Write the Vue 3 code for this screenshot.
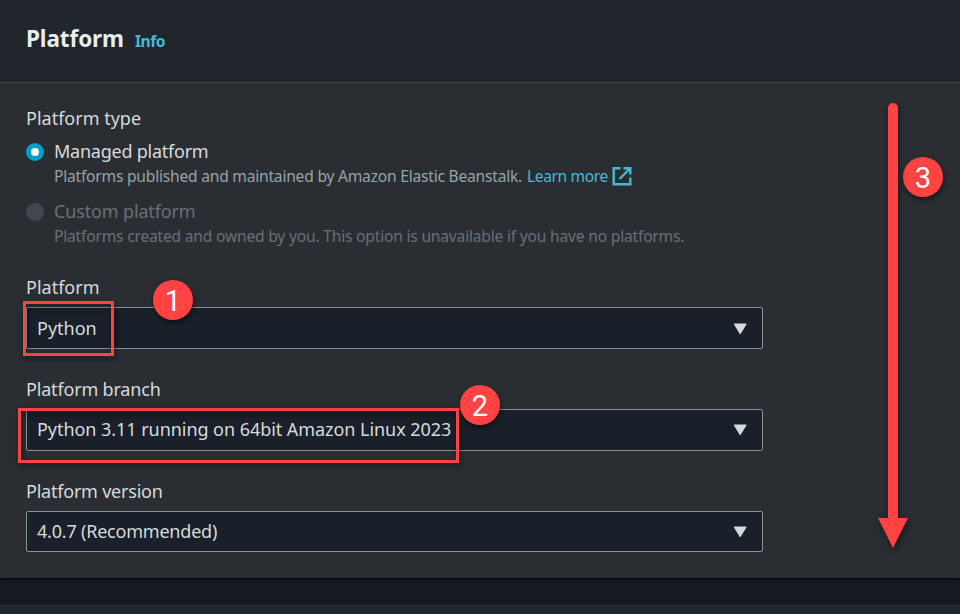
<script setup>
const fields = [
  { label: 'Platform', value: 'Python', key: 'platform' },
  { label: 'Platform branch', value: 'Python 3.11 running on 64bit Amazon Linux 2023', key: 'branch' },
  { label: 'Platform version', value: '4.0.7 (Recommended)', key: 'version' },
]
</script>

<template>
  <main class="page">
    <section class="panel">
      <header class="head">
        <h2 class="title">Platform</h2>
        <a class="info">Info</a>
      </header>
      <div class="body">
        <div class="label type-label"><span>Platform type</span></div>
        <div class="option">
          <span class="radio on"></span>
          <div class="copy">
            <div class="name"><span class="n1">Managed platform</span></div>
            <div class="desc">
              <span class="d1">Platforms published and maintained by Amazon Elastic Beanstalk.</span>
              <a class="link">Learn more</a>
              <svg class="ext" width="20" height="20" viewBox="0 0 20 20" fill="none" stroke="#44b9d6" stroke-width="2.4">
                <path d="M8.5 2.2H1.7V18.3H18.3V11.5" />
                <path d="M11.5 2.2H18.3V8.5M18 2.5L7.5 13" />
              </svg>
            </div>
          </div>
        </div>
        <div class="option disabled">
          <span class="radio"></span>
          <div class="copy">
            <div class="name"><span class="n2">Custom platform</span></div>
            <div class="desc"><span class="d2">Platforms created and owned by you. This option is unavailable if you have no platforms.</span></div>
          </div>
        </div>
        <div v-for="f in fields" :key="f.key" class="field" :class="f.key">
          <div class="label"><span>{{ f.label }}</span></div>
          <div class="select">
            <span class="value">{{ f.value }}</span>
            <svg class="caret" width="14" height="12" viewBox="0 0 14 12">
              <path d="M1.2 1H13.2L7.2 10.8Z" fill="#d5dbdb" stroke="#d5dbdb" stroke-width="1" stroke-linejoin="round" />
            </svg>
          </div>
        </div>
      </div>
    </section>
    <div class="next"></div>

    <div class="frame f1"></div>
    <div class="frame f2"></div>
    <div class="badge b1">1</div>
    <div class="badge b2">2</div>
    <div class="badge b3">3</div>
    <svg class="arrow" width="50" height="470" viewBox="0 0 50 470">
      <path d="M20 440V28A5 5 0 0 1 30 28V438H40L25 468L10 438H20Z" fill="#ff4242" />
    </svg>
  </main>
</template>

<style>
body { background: #16191f; overflow: hidden; }
</style>

<style scoped>
.page {
  position: relative;
  width: 960px;
  height: 614px;
  overflow: hidden;
  box-sizing: border-box;
  background: #16191f;
  color: #d5dbdb;
  font-family: "Noto Sans", sans-serif;
  font-size: 18px;
  white-space: nowrap;
}
.panel { height: 578px; background: #2a2e33; box-shadow: 0 1px 2px #050709; }
.head {
  display: flex;
  align-items: baseline;
  box-sizing: border-box;
  height: 83px;
  padding: 24px 26px 0;
  background: #21252c;
  border-bottom: 1px solid #414750;
}
.title { margin: 0; width: 109px; font-size: 22.5px; line-height: 30px; font-weight: 700; color: #eaeded; letter-spacing: -0.1px; }
.info { font-size: 15.6px; font-weight: 700; color: #44b9d6; letter-spacing: -0.5px; }
.body { padding: 24px 26px 0; }
.label { height: 24px; line-height: 22px; }
.type-label { margin-bottom: 9px; }
.option { display: flex; height: 60px; }
.radio { box-sizing: border-box; width: 18px; height: 18px; margin: 3px 10px 0 0; border-radius: 50%; background: #414750; }
.on { background: #fff; border: 5.5px solid #00a1c9; }
.name { height: 24px; line-height: 22px; }
.n1 { letter-spacing: -0.24px; }
.n2 { letter-spacing: -0.15px; }
.desc { display: flex; align-items: center; height: 24px; font-size: 15.6px; line-height: 24px; color: #95a5a6; }
.d1 { letter-spacing: -0.22px; }
.d2 { letter-spacing: -0.2px; }
.link { margin-left: 5px; color: #44b9d6; letter-spacing: -0.4px; }
.ext { margin-left: 4px; }
.disabled .name, .disabled .desc { color: #687078; }
.field { height: 102px; }
.platform { margin-top: 16px; }
.branch .label { letter-spacing: -0.18px; }
.version .label { letter-spacing: -0.22px; }
.branch .value { letter-spacing: -0.05px; margin-top: -2px; }
.version .value { letter-spacing: -0.21px; margin-top: -2px; }
.select {
  display: flex;
  align-items: center;
  justify-content: space-between;
  box-sizing: border-box;
  width: 737px;
  height: 42px;
  margin-top: 7px;
  padding: 0 15px 0 10px;
  border: 1px solid #879596;
  border-radius: 2px;
  background: #1a2029;
}
.platform .caret { margin-top: 2px; }
.version .select { height: 41px; }
.next { box-sizing: border-box; height: 9px; margin-top: 27px; background: #21252c; border-top: 1px solid #30343a; }
.frame { position: absolute; box-sizing: border-box; border: 3px solid #ff4242; filter: drop-shadow(1px 3px 3px rgba(0, 0, 0, 0.55)); }
.f1 { left: 23px; top: 301px; width: 91px; height: 55px; }
.f2 { left: 18px; top: 408px; width: 441px; height: 55px; }
.badge {
  position: absolute;
  width: 40px;
  height: 40px;
  border-radius: 50%;
  background: #ff4242;
  color: #fff;
  font: 29px/42px Roboto, "Liberation Sans", sans-serif;
  text-align: center;
  box-shadow: 1px 3px 5px rgba(0, 0, 0, 0.5);
}
.b1 { left: 153px; top: 280px; }
.b2 { left: 460px; top: 385px; }
.b3 { left: 903px; top: 157px; }
.arrow { position: absolute; left: 868px; top: 80px; filter: drop-shadow(1px 3px 3px rgba(0, 0, 0, 0.5)); }
</style>
